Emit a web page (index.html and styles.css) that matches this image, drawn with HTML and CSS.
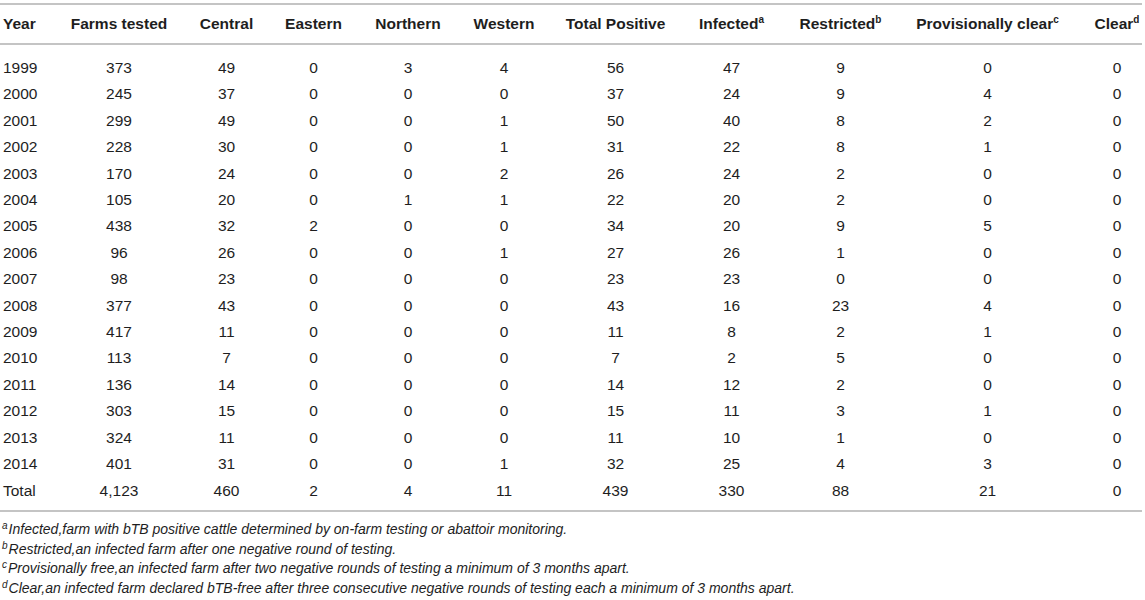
FILE: index.html
```html
<!DOCTYPE html>
<html>
<head>
<meta charset="utf-8">
<link rel="stylesheet" href="styles.css">
</head>
<body>
<div class="wrap">
<table class="data">
<colgroup>
<col class="c-year"><col class="c-farms"><col class="c-central"><col class="c-eastern"><col class="c-northern"><col class="c-western"><col class="c-total"><col class="c-infected"><col class="c-restricted"><col class="c-prov"><col class="c-clear">
</colgroup>
<thead>
<tr><th>Year</th><th>Farms tested</th><th>Central</th><th>Eastern</th><th>Northern</th><th>Western</th><th>Total Positive</th><th>Infected<sup>a</sup></th><th>Restricted<sup>b</sup></th><th>Provisionally clear<sup>c</sup></th><th>Clear<sup>d</sup></th></tr>
</thead>
<tbody>
<tr><td>1999</td><td>373</td><td>49</td><td>0</td><td>3</td><td>4</td><td>56</td><td>47</td><td>9</td><td>0</td><td>0</td></tr>
<tr><td>2000</td><td>245</td><td>37</td><td>0</td><td>0</td><td>0</td><td>37</td><td>24</td><td>9</td><td>4</td><td>0</td></tr>
<tr><td>2001</td><td>299</td><td>49</td><td>0</td><td>0</td><td>1</td><td>50</td><td>40</td><td>8</td><td>2</td><td>0</td></tr>
<tr><td>2002</td><td>228</td><td>30</td><td>0</td><td>0</td><td>1</td><td>31</td><td>22</td><td>8</td><td>1</td><td>0</td></tr>
<tr><td>2003</td><td>170</td><td>24</td><td>0</td><td>0</td><td>2</td><td>26</td><td>24</td><td>2</td><td>0</td><td>0</td></tr>
<tr><td>2004</td><td>105</td><td>20</td><td>0</td><td>1</td><td>1</td><td>22</td><td>20</td><td>2</td><td>0</td><td>0</td></tr>
<tr><td>2005</td><td>438</td><td>32</td><td>2</td><td>0</td><td>0</td><td>34</td><td>20</td><td>9</td><td>5</td><td>0</td></tr>
<tr><td>2006</td><td>96</td><td>26</td><td>0</td><td>0</td><td>1</td><td>27</td><td>26</td><td>1</td><td>0</td><td>0</td></tr>
<tr><td>2007</td><td>98</td><td>23</td><td>0</td><td>0</td><td>0</td><td>23</td><td>23</td><td>0</td><td>0</td><td>0</td></tr>
<tr><td>2008</td><td>377</td><td>43</td><td>0</td><td>0</td><td>0</td><td>43</td><td>16</td><td>23</td><td>4</td><td>0</td></tr>
<tr><td>2009</td><td>417</td><td>11</td><td>0</td><td>0</td><td>0</td><td>11</td><td>8</td><td>2</td><td>1</td><td>0</td></tr>
<tr><td>2010</td><td>113</td><td>7</td><td>0</td><td>0</td><td>0</td><td>7</td><td>2</td><td>5</td><td>0</td><td>0</td></tr>
<tr><td>2011</td><td>136</td><td>14</td><td>0</td><td>0</td><td>0</td><td>14</td><td>12</td><td>2</td><td>0</td><td>0</td></tr>
<tr><td>2012</td><td>303</td><td>15</td><td>0</td><td>0</td><td>0</td><td>15</td><td>11</td><td>3</td><td>1</td><td>0</td></tr>
<tr><td>2013</td><td>324</td><td>11</td><td>0</td><td>0</td><td>0</td><td>11</td><td>10</td><td>1</td><td>0</td><td>0</td></tr>
<tr><td>2014</td><td>401</td><td>31</td><td>0</td><td>0</td><td>1</td><td>32</td><td>25</td><td>4</td><td>3</td><td>0</td></tr>
<tr><td>Total</td><td>4,123</td><td>460</td><td>2</td><td>4</td><td>11</td><td>439</td><td>330</td><td>88</td><td>21</td><td>0</td></tr>
</tbody>
</table>
<div class="notes">
<p><sup>a</sup>Infected,farm with bTB positive cattle determined by on-farm testing or abattoir monitoring.</p>
<p><sup>b</sup>Restricted,an infected farm after one negative round of testing.</p>
<p><sup>c</sup>Provisionally free,an infected farm after two negative rounds of testing a minimum of 3 months apart.</p>
<p><sup>d</sup>Clear,an infected farm declared bTB-free after three consecutive negative rounds of testing each a minimum of 3 months apart.</p>
</div>
</div>
</body>
</html>
```
FILE: styles.css
```css
html, body {
  margin: 0;
  padding: 0;
  background: #fff;
}
body {
  font-family: "Liberation Sans", Arial, Helvetica, sans-serif;
  color: #1e1e1e;
}
.wrap {
  padding-top: 3px;
}
.data {
  width: 1142px;
  table-layout: fixed;
  border-collapse: collapse;
  font-size: 15.5px;
  border-top: 2px solid #c4c4c4;
  border-bottom: 2px solid #c4c4c4;
}
.c-year { width: 54px; }
.c-farms { width: 130px; }
.c-central { width: 85px; }
.c-eastern { width: 89px; }
.c-northern { width: 100px; }
.c-western { width: 92px; }
.c-total { width: 131px; }
.c-infected { width: 101px; }
.c-restricted { width: 117px; }
.c-prov { width: 177px; }
.c-clear { width: 66px; }

.data th, .data td {
  padding: 0;
  text-align: center;
  white-space: nowrap;
}
.data th {
  font-weight: bold;
  height: 38px;
  border-bottom: 2px solid #c4c4c4;
}
.data td {
  height: 26.4px;
  line-height: 26.4px;
}
.data th:first-child, .data td:first-child {
  text-align: left;
  padding-left: 3px;
}
.data th:last-child, .data td:last-child {
  padding-left: 16px;
}
.data tbody tr:first-child td {
  padding-top: 10px;
}
.data tbody tr:last-child td {
  padding-bottom: 6px;
}
.data sup {
  font-size: 10px;
  line-height: 0;
  vertical-align: 6px;
}
.notes {
  padding-top: 8px;
  font-size: 14px;
  font-style: italic;
}
.notes p {
  margin: 0;
  line-height: 19.7px;
  padding-left: 2px;
}
.notes sup {
  font-size: 10px;
  line-height: 0;
  vertical-align: 5px;
  margin-right: 1px;
}
```
